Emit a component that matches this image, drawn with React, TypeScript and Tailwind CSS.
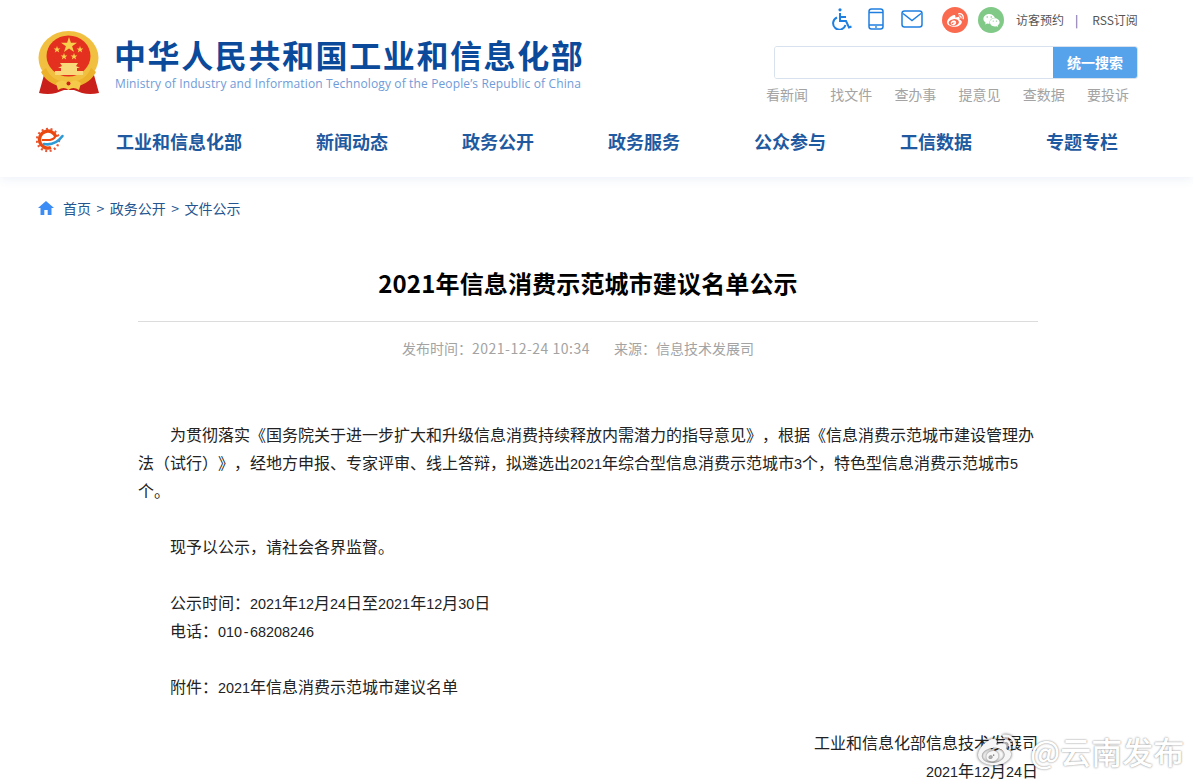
import React from "react";
import { FaWeibo, FaWeixin } from "react-icons/fa";

const Emblem = () => (
  <svg width="62" height="64" viewBox="0 0 62 64" aria-hidden="true">
    <path d="M6 44 L1 62 Q10 64 18 62 L26 59 H36 L44 62 Q52 64 61 62 L56 44 Z" fill="#c9201b" />
    <ellipse cx="30.5" cy="27" rx="30" ry="27" fill="#f2c040" />
    <ellipse cx="30.5" cy="25" rx="22" ry="20.5" fill="#e4301f" />
    <polygon points="31,6 32.9,11.7 39,11.7 34.1,15.3 36,21 31,17.5 26,21 27.9,15.3 23,11.7 29.1,11.7" fill="#f8d04c" />
    <polygon points="19,15 19.9,17.4 22.4,17.4 20.4,19 21.2,21.4 19,20 16.8,21.4 17.6,19 15.6,17.4 18.1,17.4" fill="#f8d04c" />
    <polygon points="42,15 42.9,17.4 45.4,17.4 43.4,19 44.2,21.4 42,20 39.8,21.4 40.6,19 38.6,17.4 41.1,17.4" fill="#f8d04c" />
    <polygon points="26,22 26.9,24.4 29.4,24.4 27.4,26 28.2,28.4 26,27 23.8,28.4 24.6,26 22.6,24.4 25.1,24.4" fill="#f8d04c" />
    <polygon points="36,22 36.9,24.4 39.4,24.4 37.4,26 38.2,28.4 36,27 33.8,28.4 34.6,26 32.6,24.4 35.1,24.4" fill="#f8d04c" />
    <path d="M22 32 H40 L38 35 L42 37 H39 V40 H45 V44 H17 V40 H23 V37 H20 L24 35 Z" fill="#f8d878" />
    <path d="M8 37 Q14 51 30.5 51 Q47 51 53 37 L58 41 Q50 56 30.5 56 Q11 56 3 41 Z" fill="#edb22c" />
    <path d="M18 52 Q24 47 30.5 52 Q37 47 43 52 L41 59 Q35 55 30.5 59 Q26 55 20 59 Z" fill="#f5c94a" />
    <circle cx="30.5" cy="52.5" r="2" fill="#c9201b" />
  </svg>
);

const GearLogo = () => (
  <svg width="30" height="26" viewBox="0 0 30 26" aria-hidden="true">
    <circle cx="12" cy="13" r="11" fill="none" stroke="#e65a3a" strokeWidth="2.4" strokeDasharray="2 2.5" />
    <path d="M20 10 A8.5 8.5 0 1 0 15 20.5" fill="none" stroke="#ea4a12" strokeWidth="3.4" />
    <path d="M6 13 H14 Q19 12 20 8" fill="none" stroke="#ea4a12" strokeWidth="2.2" />
    <path d="M8 17 Q19 19 26.5 9" fill="none" stroke="#2d9ad6" strokeWidth="2.6" strokeLinecap="round" />
  </svg>
);

const Wheelchair = () => (
  <svg width="20" height="22" viewBox="0 0 20 22" fill="none" stroke="#1f7fe0" strokeWidth="2" aria-hidden="true">
    <circle cx="8" cy="1.8" r="1.6" fill="#1f7fe0" stroke="none" />
    <path d="M8 5 V13 H14 L17 19.5 L19.5 18.5" />
    <path d="M8 9 H14" />
    <path d="M5 9.5 A6.3 6.3 0 1 0 13.5 17" />
  </svg>
);

const Phone = () => (
  <svg width="16" height="22" viewBox="0 0 16 22" fill="none" stroke="#1f7fe0" strokeWidth="1.5" aria-hidden="true">
    <rect x="1" y="1" width="14" height="20" rx="2.5" />
    <path d="M1 4.5 H15 M1 17 H15" />
    <circle cx="8" cy="19" r="0.9" fill="#1f7fe0" stroke="none" />
  </svg>
);

const MailIcon = () => (
  <svg width="22" height="18" viewBox="0 0 22 18" fill="none" stroke="#1f7fe0" strokeWidth="1.5" aria-hidden="true">
    <rect x="1" y="1" width="20" height="16" rx="2.5" />
    <path d="M2 3.5 L11 10.5 L20 3.5" />
  </svg>
);

const D = ({ children }: { children: React.ReactNode }) => (
  <span className="font-['Liberation_Sans',sans-serif] text-[14.4px] leading-[0]">{children}</span>
);

const nav = ["工业和信息化部", "新闻动态", "政务公开", "政务服务", "公众参与", "工信数据", "专题专栏"];
const quick = ["看新闻", "找文件", "查办事", "提意见", "查数据", "要投诉"];
const sans = "font-['Noto_Sans_CJK_SC','Liberation_Sans',sans-serif]";

export default function App() {
  return (
    <div className={`relative h-[779px] w-[1193px] overflow-hidden bg-white ${sans}`}>
      <header className="h-[177px] bg-white shadow-[0_2px_10px_rgba(40,100,170,0.09)]">
        <div className="ml-[38px] flex w-[1100px] items-start justify-between">
          <div className="flex items-start pt-[31px]">
            <Emblem />
            <div className="ml-[14px] pt-[3px]">
              <div className="h-[40px] whitespace-nowrap text-[32px] font-bold leading-[40px] tracking-[1.6px] text-[#0b4a9b]">
                中华人民共和国工业和信息化部
              </div>
              <div className="mt-[2px] whitespace-nowrap pl-[1px] font-['Open_Sans',sans-serif] text-[12px] leading-[16px] tracking-[0.13px] text-[#6f9bd8]">
                Ministry of Industry and Information Technology of the People’s Republic of China
              </div>
            </div>
          </div>
          <div className="w-[364px]">
            <div className="flex h-[46px] items-start pl-[58px] pt-[8px]">
              <Wheelchair />
              <span className="ml-[16px]"><Phone /></span>
              <span className="ml-[17px] mt-[2px]"><MailIcon /></span>
              <span className="ml-[19px] -mt-[1px] flex h-[26px] w-[26px] items-center justify-center rounded-full bg-[#fa6a4f] text-white"><FaWeibo size={17} /></span>
              <span className="ml-[10px] -mt-[1px] flex h-[26px] w-[26px] items-center justify-center rounded-full bg-[#80c986] text-white"><FaWeixin size={17} /></span>
              <span className="ml-[12px] mt-[3px] whitespace-nowrap text-[12px] leading-[18px] text-[#555]">访客预约</span>
              <span className="ml-[11px] mt-[3px] text-[12px] leading-[18px] text-[#2a5f9e]">|</span>
              <span className="ml-[14px] mt-[3px] whitespace-nowrap text-[12px] leading-[18px] text-[#555]">RSS订阅</span>
            </div>
            <div className="flex h-[33px] w-[364px] overflow-hidden rounded-[3px] border border-[#d8e2ee]">
              <div className="flex-1 bg-white" />
              <div className="flex w-[84px] items-center justify-center bg-[#56a3ec] text-[14px] font-bold text-white">统一搜索</div>
            </div>
            <div className="-ml-[8px] mt-[5px] flex gap-[22.2px] text-[14px] leading-[20px] text-[#a3a3a3]">
              {quick.map((q) => <span key={q} className="whitespace-nowrap">{q}</span>)}
            </div>
          </div>
        </div>
        <div className="ml-[36px] mt-[23px] flex items-center">
          <span className="-mt-[3px]"><GearLogo /></span>
          <nav className="ml-[50px] flex gap-[74px]">
            {nav.map((n) => (
              <span key={n} className="whitespace-nowrap text-[18px] font-bold leading-[28px] text-[#1f5aa0]">{n}</span>
            ))}
          </nav>
        </div>
      </header>

      <div className="ml-[38px] mt-[21px] flex items-center text-[14px] leading-[20px] text-[#24558f]">
        <svg width="16" height="14" viewBox="0 0 16 14" fill="#3b8cf5" aria-hidden="true">
          <path d="M8 0 L16 7 H13.5 V14 H9.7 V9 H6.3 V14 H2.5 V7 H0 Z" />
        </svg>
        <span className="ml-[9px]">首页</span>
        <span className="mx-[5.5px]">&gt;</span>
        <span>政务公开</span>
        <span className="mx-[5.5px]">&gt;</span>
        <span>文件公示</span>
      </div>

      <main className="ml-[138px] w-[900px] [text-spacing-trim:space-all]">
        <h1 className="mt-[49px] text-center text-[24px] font-bold leading-[32px] tracking-[0.15px] text-black">2021年信息消费示范城市建议名单公示</h1>
        <div className="mt-[22px] border-t border-[#dcdcdc]" />
        <div className="mt-[16px] flex justify-center gap-[24px] pr-[20px] text-[14px] leading-[20px] text-[#a3a3a3]">
          <span>发布时间：<span className="tracking-[0.5px]">2021-12-24 10:34</span></span>
          <span>来源：信息技术发展司</span>
        </div>
        <div className="mt-[62px] text-[16px] font-normal leading-[28px] text-[#222]">
          <p className="indent-[32px]">为贯彻落实《国务院关于进一步扩大和升级信息消费持续释放内需潜力的指导意见》，根据《信息消费示范城市建设管理办法（试行）》，经地方申报、专家评审、线上答辩，拟遴选出<D>2021</D>年综合型信息消费示范城市<D>3</D>个，特色型信息消费示范城市<D>5</D>个。</p>
          <p className="mt-[28px] indent-[32px]">现予以公示，请社会各界监督。</p>
          <p className="mt-[28px] indent-[32px]">公示时间：<D>2021</D>年<D>12</D>月<D>24</D>日至<D>2021</D>年<D>12</D>月<D>30</D>日</p>
          <p className="indent-[32px]">电话：<D>010<span className="mx-[1.6px]">-</span>68208246</D></p>
          <p className="mt-[28px] indent-[32px]">附件：<D>2021</D>年信息消费示范城市建议名单</p>
          <p className="mt-[28px] text-right">工业和信息化部信息技术发展司</p>
          <p className="text-right"><D>2021</D>年<D>12</D>月<D>24</D>日</p>
        </div>
      </main>

      <div className="absolute left-[978px] top-[732px] flex items-center whitespace-nowrap text-white">
        <FaWeibo size={38} className="text-[#f6f6f6] drop-shadow-[0_0_1.5px_rgba(0,0,0,0.7)]" />
        <span className="ml-[14px] text-[31px] font-medium leading-[36px] [text-shadow:0_0_2px_rgba(0,0,0,0.55)]">@云南发布</span>
      </div>
    </div>
  );
}
